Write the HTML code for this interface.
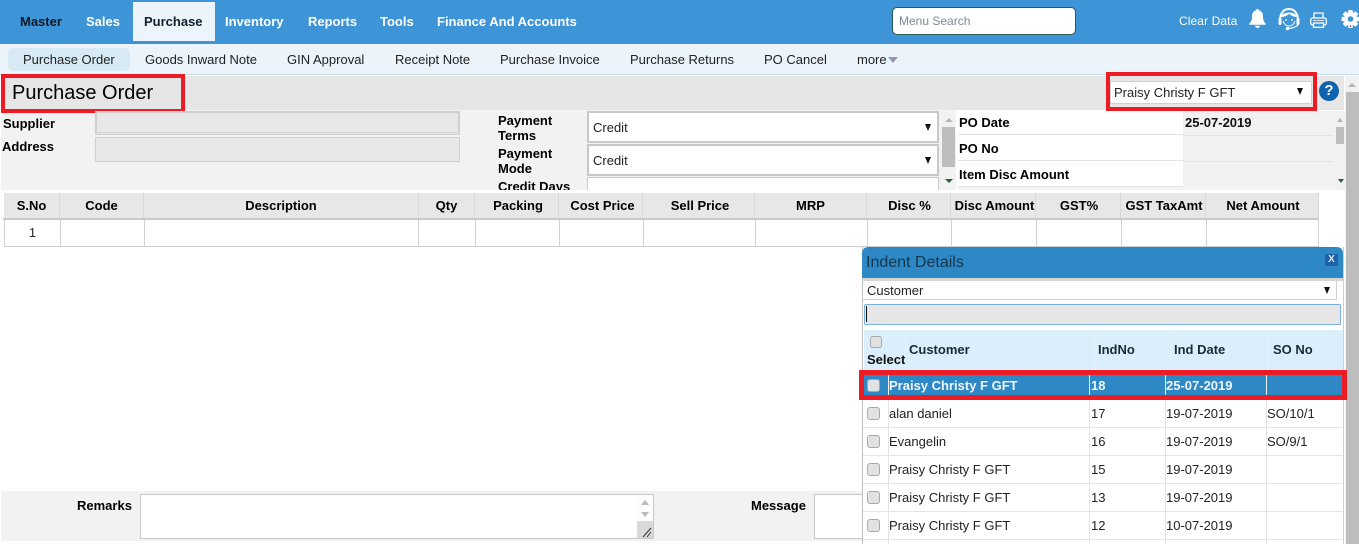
<!DOCTYPE html>
<html><head><meta charset="utf-8"><style>
html,body{margin:0;padding:0;width:1359px;height:544px;overflow:hidden;background:#fff}
body{position:relative;font:13px "Liberation Sans",sans-serif;color:#000}
div,span,svg{position:absolute;box-sizing:border-box}
.t{white-space:nowrap;line-height:16px;margin-top:1px}
.b{font-weight:bold}
.nav{top:14px;font-weight:bold;color:#fff;font-size:13px;white-space:nowrap;line-height:16px}
.sub{top:52px;font-size:13px;color:#222;white-space:nowrap;line-height:16px}
.arr{width:0;height:0;border-left:4px solid transparent;border-right:4px solid transparent;border-top:7px solid #111}
.th{top:193px;height:25px;background:#e7e7e7;border-right:1px solid #d8d8d8;text-align:center;font-weight:bold;font-size:13px;line-height:26px;white-space:nowrap}
.td{top:220px;height:27px;background:#fff;border-right:1px solid #d2d2d2;border-bottom:1px solid #cfcfcf}
.row{left:863px;width:480px;height:28px;border-bottom:1px solid #e4e4e4;background:#fff}
.v{top:0;bottom:0;width:1px;background:#e4e4e4}
.cb{left:4px;top:7px;width:13px;height:13px;background:#e2e2e2;border:1px solid #a8a8a8;border-radius:3px}
.rt{top:6px;line-height:16px;font-size:13px;white-space:nowrap;color:#222}
.red{border:4px solid #ed1c24}
</style></head><body>

<div style="left:0;top:0;width:1359px;height:44px;background:#3d94d6"></div>
<div style="left:133px;top:2px;width:82px;height:39px;background:#edf5fc"></div>
<span class="nav" style="left:20px;color:#0c1a28">Master</span>
<span class="nav" style="left:86px">Sales</span>
<span class="nav" style="left:144px;color:#10202e">Purchase</span>
<span class="nav" style="left:225px">Inventory</span>
<span class="nav" style="left:308px">Reports</span>
<span class="nav" style="left:380px">Tools</span>
<span class="nav" style="left:437px">Finance And Accounts</span>

<div style="left:892px;top:7px;width:184px;height:28px;background:#fff;border:1px solid #2c5a50;border-radius:5px"></div>
<span class="t" style="left:899px;top:12px;font-size:12px;color:#7d8a9c">Menu Search</span>
<span class="t" style="left:1179px;top:12px;font-size:12px;color:#fff;letter-spacing:.1px">Clear Data</span>

<svg style="left:1249px;top:9px" width="17" height="19" viewBox="0 0 17 19"><path d="M8.500 0c1 0 1.500.6 1.500 1.400C12.800 2 14 4.500 14 7.500c0 3.500.8 5.200 2.700 7v1.300H.3v-1.300C2.200 12.700 3 11 3 7.500c0-3 1.200-5.500 4-6.100C7 .6 7.500 0 8.500 0z" fill="#fff"/><path d="M6 16.800h5C10.700 18.300 9.700 19 8.500 19S6.300 18.300 6 16.800z" fill="#fff"/></svg>
<svg style="left:1277px;top:8px" width="24" height="23" viewBox="0 0 24 23"><path d="M3 12C3 5 7 1 12 1s9 4 9 11" fill="none" stroke="#fff" stroke-width="2"/><path d="M4 9C5 3 19 3 20 9C16 9 13.500 7.500 12.500 5.500C10 8 7 9 4 9z" fill="#fff"/><path d="M6 13c1 3 3 5 6 5s5-2 6-5" fill="none" stroke="#fff" stroke-width="1"/><rect x="1.500" y="10" width="3" height="7" rx="1.500" fill="#fff"/><rect x="19.500" y="10" width="3" height="7" rx="1.500" fill="#fff"/><path d="M21 16c0 2.500-5 4-9.500 4.500" fill="none" stroke="#fff" stroke-width="1.200"/><circle cx="10.500" cy="20.500" r="1.700" fill="#fff"/><circle cx="9" cy="12" r=".9" fill="#fff"/><circle cx="15" cy="12" r=".9" fill="#fff"/></svg>
<svg style="left:1310px;top:12px" width="17" height="16" viewBox="0 0 17 16"><path d="M4 6V1h9v5" fill="none" stroke="#fff" stroke-width="1.300"/><rect x=".7" y="6" width="15.600" height="7" rx="2" fill="none" stroke="#fff" stroke-width="1.300"/><rect x="3.500" y="11" width="10" height="4.300" fill="#3d94d6" stroke="#fff" stroke-width="1.300"/><path d="M3 8.500h11" stroke="#fff" stroke-width=".8"/></svg>
<svg style="left:1341px;top:10px" width="18" height="18" viewBox="0 0 18 18"><g transform="translate(9.500 9)"><g fill="#fff"><rect x="-2.300" y="-9" width="4.600" height="18" rx="1"/><rect x="-2.300" y="-9" width="4.600" height="18" rx="1" transform="rotate(45)"/><rect x="-2.300" y="-9" width="4.600" height="18" rx="1" transform="rotate(90)"/><rect x="-2.300" y="-9" width="4.600" height="18" rx="1" transform="rotate(135)"/><circle r="6.500"/></g><circle r="2.800" fill="#3d94d6"/><circle cx="0" cy="7" r=".8" fill="#7a1040"/></g></svg>

<div style="left:0;top:44px;width:1359px;height:31px;background:#ebf3fb;border-bottom:1px solid #c6dde8"></div>
<div style="left:8px;top:48px;width:122px;height:23px;background:#d7e9f5;border-radius:6px"></div>
<span class="sub" style="left:23px">Purchase Order</span>
<span class="sub" style="left:145px">Goods Inward Note</span>
<span class="sub" style="left:287px">GIN Approval</span>
<span class="sub" style="left:395px">Receipt Note</span>
<span class="sub" style="left:500px">Purchase Invoice</span>
<span class="sub" style="left:630px">Purchase Returns</span>
<span class="sub" style="left:764px">PO Cancel</span>
<span class="sub" style="left:857px;font-size:13px">more</span>
<div style="left:888px;top:57px;width:0;height:0;border-left:5px solid transparent;border-right:5px solid transparent;border-top:6px solid #9b93b5"></div>

<div style="left:1px;top:76px;width:1343px;height:34px;background:#e6e6e6"></div>
<span class="t" style="left:12px;top:81px;font-size:20px;line-height:22px">Purchase Order</span>

<div class="red" style="left:1106px;top:72px;width:211px;height:39px"></div>
<div style="left:1110px;top:81px;width:202px;height:23px;background:#fff;border:1px solid #d0d0d0"></div>
<span class="t" style="left:1114px;top:84px;font-size:13px;color:#222">Praisy Christy F GFT</span>
<div class="arr" style="left:1297px;top:88px;border-left-width:3.500px;border-right-width:3.500px"></div>
<div style="left:1319px;top:81px;width:20px;height:20px;border-radius:50%;background:#0d63ad;color:#fff;font:bold 15px/20px 'Liberation Sans',sans-serif;text-align:center">?</div>

<div style="left:1345px;top:76px;width:14px;height:468px;background:#f1f1f1"></div>
<div style="left:1346px;top:92px;width:13px;height:452px;background:#bdbdbd"></div>
<div style="left:1348px;top:83px;width:0;height:0;border-left:4px solid transparent;border-right:4px solid transparent;border-bottom:4px solid #b3b3b3"></div>

<div style="left:1px;top:110px;width:955px;height:80px;background:#f2f2f2;overflow:hidden"></div>
<div class="red" style="left:1px;top:74px;width:184px;height:39px"></div>
<span class="t b" style="left:3px;top:115px">Supplier</span>
<span class="t b" style="left:2px;top:138px">Address</span>
<div style="left:95px;top:111px;width:365px;height:24px;background:#e8e8e8;border:2px solid #cfcfcf;border-bottom:3px double #cfcfcf"></div>
<div style="left:95px;top:137px;width:365px;height:25px;background:#e8e8e8;border:1px solid #cfcfcf"></div>

<span class="t b" style="left:498px;top:112px;line-height:15px">Payment<br>Terms</span>
<span class="t b" style="left:498px;top:145px;line-height:15px">Payment<br>Mode</span>
<div style="left:498px;top:178px;height:12px;width:80px;overflow:hidden"><span class="t b" style="left:0;top:0;line-height:15px">Credit Days</span></div>
<div style="left:587px;top:111px;width:352px;height:32px;background:#fff;border:2px solid #c8c8c8"></div>
<div style="left:587px;top:144px;width:352px;height:32px;background:#fff;border:2px solid #c8c8c8"></div>
<div style="left:587px;top:177px;width:352px;height:13px;background:#fff;border:1px solid #c8c8c8;border-bottom:0"></div>
<span class="t" style="left:593px;top:119px;color:#222">Credit</span>
<span class="t" style="left:593px;top:152px;color:#222">Credit</span>
<div class="arr" style="left:925px;top:124px;border-left-width:3.500px;border-right-width:3.500px"></div>
<div class="arr" style="left:925px;top:157px;border-left-width:3.500px;border-right-width:3.500px"></div>

<div style="left:941px;top:111px;width:15px;height:79px;background:#f2f2f2"></div>
<div style="left:945px;top:118px;width:0;height:0;border-left:4px solid transparent;border-right:4px solid transparent;border-bottom:4px solid #b5b5b5"></div>
<div style="left:942px;top:127px;width:13px;height:40px;background:#bdbdbd"></div>
<div style="left:945px;top:179px;width:0;height:0;border-left:4px solid transparent;border-right:4px solid transparent;border-top:4px solid #2e5d3a"></div>

<div style="left:958px;top:111px;width:225px;height:24px;background:#fff;border-bottom:1px solid #e2e2e2"></div>
<div style="left:958px;top:137px;width:225px;height:24px;background:#fff;border-bottom:1px solid #e2e2e2"></div>
<div style="left:958px;top:163px;width:225px;height:24px;background:#fff;border-bottom:1px solid #e2e2e2"></div>
<div style="left:1183px;top:111px;width:150px;height:79px;background:#f1f1f1"></div>
<div style="left:1183px;top:135px;width:150px;height:1px;background:#e2e2e2"></div>
<div style="left:1183px;top:161px;width:150px;height:1px;background:#e2e2e2"></div>
<div style="left:958px;top:187px;width:375px;height:3px;background:#f4f4f4"></div>
<span class="t b" style="left:959px;top:114px">PO Date</span>
<span class="t b" style="left:959px;top:140px">PO No</span>
<span class="t b" style="left:959px;top:166px">Item Disc Amount</span>
<span class="t b" style="left:1185px;top:114px;color:#111">25-07-2019</span>
<div style="left:1333px;top:111px;width:12px;height:79px;background:#f1f1f1"></div>
<div style="left:1337px;top:118px;width:0;height:0;border-left:3px solid transparent;border-right:3px solid transparent;border-bottom:4px solid #b5b5b5"></div>
<div style="left:1336px;top:127px;width:8px;height:17px;background:#bdbdbd"></div>
<div style="left:1338px;top:179px;width:0;height:0;border-left:3px solid transparent;border-right:3px solid transparent;border-top:4px solid #2e5d3a"></div>

<div style="left:3px;top:218px;width:1316px;height:2px;background:#cacaca"></div>
<div class="th" style="left:4px;width:56px">S.No</div>
<div class="th" style="left:60px;width:84px">Code</div>
<div class="th" style="left:144px;width:275px">Description</div>
<div class="th" style="left:419px;width:56px">Qty</div>
<div class="th" style="left:475px;width:84px;padding-left:3px">Packing</div>
<div class="th" style="left:559px;width:84px;padding-left:4px">Cost Price</div>
<div class="th" style="left:643px;width:112px;padding-left:3px">Sell Price</div>
<div class="th" style="left:755px;width:112px">MRP</div>
<div class="th" style="left:867px;width:84px;padding-left:2px">Disc %</div>
<div class="th" style="left:951px;width:85px;padding-left:3px">Disc Amount</div>
<div class="th" style="left:1036px;width:85px;padding-left:2px">GST%</div>
<div class="th" style="left:1121px;width:85px;padding-left:2px">GST TaxAmt</div>
<div class="th" style="left:1206px;width:113px;padding-left:2px">Net Amount</div>

<div class="td" style="left:4px;width:57px;border-left:1px solid #d2d2d2;text-align:center;line-height:26px;color:#222">1</div>
<div class="td" style="left:61px;width:84px"></div>
<div class="td" style="left:145px;width:274px"></div>
<div class="td" style="left:419px;width:57px"></div>
<div class="td" style="left:476px;width:84px"></div>
<div class="td" style="left:560px;width:84px"></div>
<div class="td" style="left:644px;width:112px"></div>
<div class="td" style="left:756px;width:112px"></div>
<div class="td" style="left:868px;width:84px"></div>
<div class="td" style="left:952px;width:85px"></div>
<div class="td" style="left:1037px;width:85px"></div>
<div class="td" style="left:1122px;width:85px"></div>
<div class="td" style="left:1207px;width:112px"></div>

<div style="left:1px;top:491px;width:862px;height:50px;background:#f2f2f2"></div>
<span class="t b" style="left:77px;top:497px">Remarks</span>
<div style="left:140px;top:494px;width:514px;height:45px;background:#fff;border:1px solid #c8c8c8"></div>
<div style="left:637px;top:495px;width:16px;height:43px;background:#fdfdfd"></div>
<div style="left:641px;top:500px;width:0;height:0;border-left:4px solid transparent;border-right:4px solid transparent;border-bottom:5px solid #b9b9b9"></div>
<div style="left:641px;top:512px;width:0;height:0;border-left:4px solid transparent;border-right:4px solid transparent;border-top:5px solid #b9b9b9"></div>
<div style="left:637px;top:521px;width:16px;height:17px;background:#d9d9d9"></div>
<svg style="left:641px;top:527px" width="12" height="11" viewBox="0 0 12 11"><path d="M2 10L10 1M6 10L10 5" stroke="#333" stroke-width="1" fill="none"/></svg>
<span class="t b" style="left:751px;top:497px">Message</span>
<div style="left:814px;top:494px;width:60px;height:45px;background:#fff;border:1px solid #c8c8c8"></div>

<div style="left:862px;top:247px;width:482px;height:297px;background:#fff;border-left:1px solid #c0c0c0;border-right:1px solid #d0d0d0"></div>
<div style="left:862px;top:247px;width:481px;height:31px;background:#2f88c6;border-radius:6px 6px 0 0"></div>
<span class="t" style="left:866px;top:253px;font-size:16px;line-height:18px;color:#12374f">Indent Details</span>
<div style="left:1325px;top:254px;width:13px;height:12px;background:#1e62a8;color:#dfe8f2;font:bold 10px/12px 'Liberation Sans',sans-serif;text-align:center">X</div>
<div style="left:862px;top:278px;width:481px;height:3px;background:#d5d5d5"></div>
<div style="left:863px;top:281px;width:474px;height:19px;background:#fff;border-bottom:1px solid #cfcfcf;border-right:1px solid #cfcfcf"></div>
<span class="t" style="left:867px;top:282px;color:#222">Customer</span>
<div class="arr" style="left:1324px;top:287px;border-left-width:3px;border-right-width:3px"></div>
<div style="left:864px;top:304px;width:477px;height:21px;background:#e6e6e6;border:1px solid #7ab0e0;border-radius:2px"></div>
<div style="left:866px;top:306px;width:1px;height:16px;background:#111"></div>

<div style="left:864px;top:330px;width:479px;height:40px;background:#daeefc"></div>
<div style="left:905px;top:330px;width:1px;height:40px;background:#e2f1fb"></div>
<div style="left:1094px;top:330px;width:1px;height:40px;background:#e2f1fb"></div>
<div style="left:1170px;top:330px;width:1px;height:40px;background:#e2f1fb"></div>
<div style="left:1267px;top:330px;width:1px;height:40px;background:#e2f1fb"></div>
<div style="left:870px;top:336px;width:12px;height:12px;background:#e2e2e2;border:1px solid #a8a8a8;border-radius:3px"></div>
<span class="t b" style="left:867px;top:351px;color:#111">Select</span>
<span class="t b" style="left:909px;top:341px;color:#1a2a33">Customer</span>
<span class="t b" style="left:1098px;top:341px;color:#1a2a33">IndNo</span>
<span class="t b" style="left:1174px;top:341px;color:#1a2a33">Ind Date</span>
<span class="t b" style="left:1273px;top:341px;color:#1a2a33">SO No</span>

<div style="left:863px;top:375px;width:480px;height:20px;background:#2f88c6"></div>
<div style="left:888px;top:375px;width:1px;height:20px;background:#e8f2f9"></div>
<div style="left:1089px;top:375px;width:1px;height:20px;background:#e8f2f9"></div>
<div style="left:1165px;top:375px;width:1px;height:20px;background:#e8f2f9"></div>
<div style="left:1266px;top:375px;width:1px;height:20px;background:#e8f2f9"></div>
<div style="left:867px;top:379px;width:13px;height:13px;background:#e2e2e2;border:1px solid #a8a8a8;border-radius:3px"></div>
<span class="t b" style="left:889px;top:377px;color:#eef6fb">Praisy Christy F GFT</span>
<span class="t b" style="left:1091px;top:377px;color:#eef6fb">18</span>
<span class="t b" style="left:1166px;top:377px;color:#eef6fb">25-07-2019</span>
<div class="red" style="left:859px;top:370px;width:488px;height:30px;border-width:5px"></div>

<div class="row" style="top:400px"><div class="v" style="left:25px"></div><div class="v" style="left:226px"></div><div class="v" style="left:302px"></div><div class="v" style="left:403px"></div><div class="cb"></div><span class="rt" style="left:26px">alan daniel</span><span class="rt" style="left:228px">17</span><span class="rt" style="left:303px">19-07-2019</span><span class="rt" style="left:404px">SO/10/1</span></div>
<div class="row" style="top:428px"><div class="v" style="left:25px"></div><div class="v" style="left:226px"></div><div class="v" style="left:302px"></div><div class="v" style="left:403px"></div><div class="cb"></div><span class="rt" style="left:26px">Evangelin</span><span class="rt" style="left:228px">16</span><span class="rt" style="left:303px">19-07-2019</span><span class="rt" style="left:404px">SO/9/1</span></div>
<div class="row" style="top:456px"><div class="v" style="left:25px"></div><div class="v" style="left:226px"></div><div class="v" style="left:302px"></div><div class="v" style="left:403px"></div><div class="cb"></div><span class="rt" style="left:26px">Praisy Christy F GFT</span><span class="rt" style="left:228px">15</span><span class="rt" style="left:303px">19-07-2019</span></div>
<div class="row" style="top:484px"><div class="v" style="left:25px"></div><div class="v" style="left:226px"></div><div class="v" style="left:302px"></div><div class="v" style="left:403px"></div><div class="cb"></div><span class="rt" style="left:26px">Praisy Christy F GFT</span><span class="rt" style="left:228px">13</span><span class="rt" style="left:303px">19-07-2019</span></div>
<div class="row" style="top:512px"><div class="v" style="left:25px"></div><div class="v" style="left:226px"></div><div class="v" style="left:302px"></div><div class="v" style="left:403px"></div><div class="cb"></div><span class="rt" style="left:26px">Praisy Christy F GFT</span><span class="rt" style="left:228px">12</span><span class="rt" style="left:303px">10-07-2019</span></div>
<div class="row" style="top:540px;height:4px;border:0"><div class="v" style="left:25px"></div><div class="v" style="left:226px"></div><div class="v" style="left:302px"></div><div class="v" style="left:403px"></div></div>

</body></html>
